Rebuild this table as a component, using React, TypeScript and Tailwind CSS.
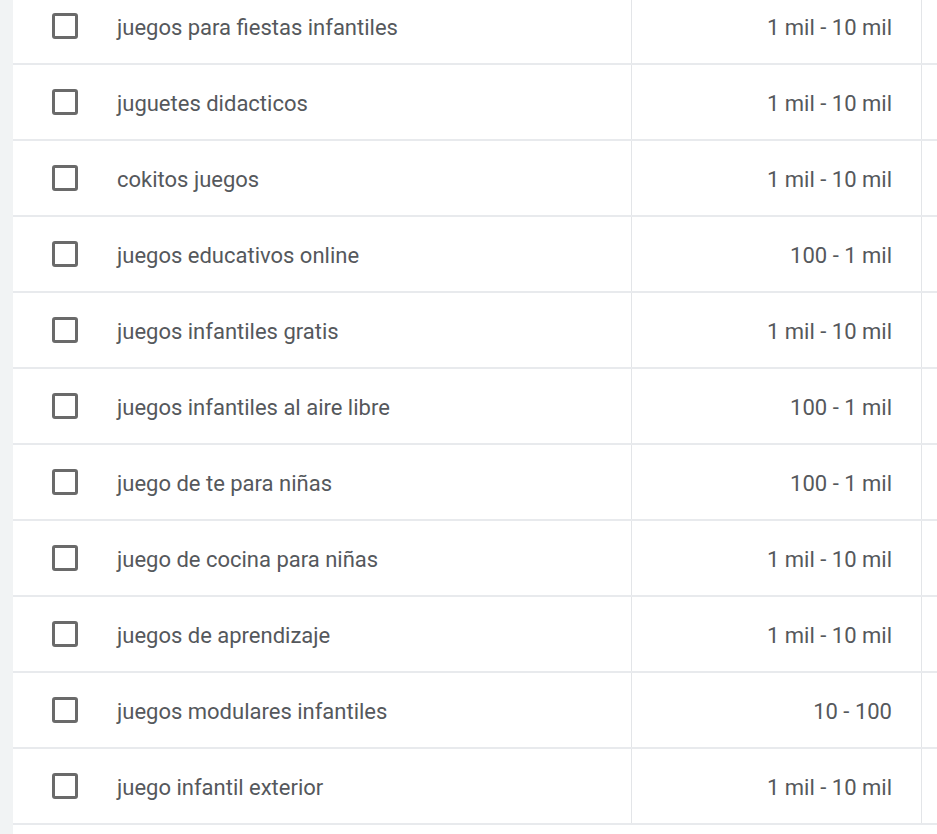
const rows = [
  { keyword: "juegos para fiestas infantiles", volume: "1 mil - 10 mil" },
  { keyword: "juguetes didacticos", volume: "1 mil - 10 mil" },
  { keyword: "cokitos juegos", volume: "1 mil - 10 mil" },
  { keyword: "juegos educativos online", volume: "100 - 1 mil" },
  { keyword: "juegos infantiles gratis", volume: "1 mil - 10 mil" },
  { keyword: "juegos infantiles al aire libre", volume: "100 - 1 mil" },
  { keyword: "juego de te para niñas", volume: "100 - 1 mil" },
  { keyword: "juego de cocina para niñas", volume: "1 mil - 10 mil" },
  { keyword: "juegos de aprendizaje", volume: "1 mil - 10 mil" },
  { keyword: "juegos modulares infantiles", volume: "10 - 100" },
  { keyword: "juego infantil exterior", volume: "1 mil - 10 mil" },
];

export default function App() {
  return (
    <div className="flex h-[834px] w-[937px] overflow-hidden bg-white font-['Roboto',sans-serif]">
      <div className="w-[13px] shrink-0 bg-[#f1f3f4]" />
      <div className="flex-1">
        <div className="mt-[-11px]">
          {rows.map((row, i) => (
            <div
              key={i}
              className="flex h-[76px] border-b-2 border-[#e8eaed]"
            >
              <div className="flex w-[619px] items-center border-r border-[#e3e5e8]">
                <div className="ml-[39px] h-[26px] w-[26px] rounded-[3px] border-[3px] border-[#6a6a6a]" />
                <span className="ml-[39px] pt-[3px] text-[22px] text-[#55585c]">
                  {row.keyword}
                </span>
              </div>
              <div className="flex w-[290px] items-center justify-end border-r border-[#e3e5e8] pr-[29px]">
                <span className="pt-[3px] text-[22px] text-[#55585c]">
                  {row.volume}
                </span>
              </div>
              <div className="flex-1" />
            </div>
          ))}
        </div>
      </div>
    </div>
  );
}
